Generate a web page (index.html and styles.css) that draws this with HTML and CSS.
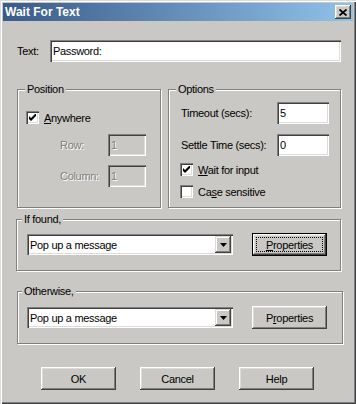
FILE: index.html
```html
<!DOCTYPE html>
<html lang="en">
<head>
  <meta charset="UTF-8">
  <title>Wait For Text</title>
  <link rel="stylesheet" href="styles.css">
</head>
<body>
  <div class="window">
    <div class="titlebar">
      <span class="title">Wait For Text</span>
      <span class="close">
        <svg width="8" height="7" viewBox="0 0 8 7"><path d="M0.5 0.5 L7.5 6.5 M7.5 0.5 L0.5 6.5" stroke="#000" stroke-width="1.7"/></svg>
      </span>
    </div>

    <div class="content">
      <div class="text-row">
        <span class="lbl">Text:</span>
        <div class="field wide">Password:</div>
      </div>

      <div class="groups">
        <fieldset class="group position">
          <legend>Position</legend>
          <div class="check first">
            <span class="box"><svg width="7" height="7" viewBox="0 0 7 7"><polygon points="0,2 2,4 7,-1 7,2 2,7 0,5" fill="#000"/></svg></span>
            <span><u>A</u>nywhere</span>
          </div>
          <div class="pair disabled">
            <span class="lbl">Row:</span>
            <div class="field small off">1</div>
          </div>
          <div class="pair disabled second">
            <span class="lbl">Column:</span>
            <div class="field small off">1</div>
          </div>
        </fieldset>

        <fieldset class="group options">
          <legend>Options</legend>
          <div class="opt-row first">
            <span class="lbl">Timeout (secs):</span>
            <div class="field num">5</div>
          </div>
          <div class="opt-row">
            <span class="lbl">Settle Time (secs):</span>
            <div class="field num">0</div>
          </div>
          <div class="check wait">
            <span class="box"><svg width="7" height="7" viewBox="0 0 7 7"><polygon points="0,2 2,4 7,-1 7,2 2,7 0,5" fill="#000"/></svg></span>
            <span><u>W</u>ait for input</span>
          </div>
          <div class="check case">
            <span class="box"></span>
            <span>Ca<u>s</u>e sensitive</span>
          </div>
        </fieldset>
      </div>

      <fieldset class="group found">
        <legend>If found,</legend>
        <div class="combo-row">
          <div class="combo">
            <span class="combo-text">Pop up a message</span>
            <span class="arrow"><svg width="7" height="4" viewBox="0 0 7 4"><polygon points="0,0 7,0 3.5,4" fill="#000"/></svg></span>
          </div>
          <div class="btn default"><span class="focus"><u>P</u>roperties</span></div>
        </div>
      </fieldset>

      <fieldset class="group otherwise">
        <legend>Otherwise,</legend>
        <div class="combo-row">
          <div class="combo">
            <span class="combo-text">Pop up a message</span>
            <span class="arrow"><svg width="7" height="4" viewBox="0 0 7 4"><polygon points="0,0 7,0 3.5,4" fill="#000"/></svg></span>
          </div>
          <div class="btn">P<u>r</u>operties</div>
        </div>
      </fieldset>

      <div class="buttons">
        <div class="btn">OK</div>
        <div class="btn">Cancel</div>
        <div class="btn">Help</div>
      </div>
    </div>
  </div>
</body>
</html>
```

FILE: styles.css
```css
body {
  margin: 0;
  font-family: "Liberation Sans", Arial, sans-serif;
  font-size: 11px;
  letter-spacing: -0.3px;
  color: #000;
}
.window {
  width: 356px;
  height: 404px;
  box-sizing: border-box;
  padding: 3px;
  background: #cac8c4;
  box-shadow: inset 1px 1px #dedcd8, inset 2px 2px #fff, inset -1px -1px #404040, inset -2px -2px #808080;
}
.titlebar {
  height: 18px;
  display: flex;
  align-items: center;
  justify-content: space-between;
  padding: 0 2px;
  background: linear-gradient(to right, #3a5a8a, #90c2ea);
}
.title {
  color: #fff;
  font-weight: bold;
  font-size: 12px;
  letter-spacing: 0;
}
.close {
  width: 16px;
  height: 14px;
  display: flex;
  align-items: center;
  justify-content: center;
  background: #cac8c4;
  box-shadow: inset -1px -1px #404040, inset 1px 1px #fff, inset -2px -2px #808080, inset 2px 2px #dedcd8;
}
.content {
  padding: 19px 12px 0 14px;
}
.text-row {
  display: flex;
  align-items: center;
}
.text-row .lbl {
  width: 33px;
}
.field {
  box-sizing: border-box;
  height: 22px;
  padding: 0 3px;
  display: flex;
  align-items: center;
  background: #fff;
  box-shadow: inset 1px 1px #808080, inset 2px 2px #404040, inset -1px -1px #fff, inset -2px -2px #dedcd8;
}
.field.wide {
  width: 292px;
}
.field.small {
  width: 38px;
}
.field.num {
  width: 52px;
}
.field.off {
  background: #cac8c4;
}
.disabled {
  color: #808080;
  text-shadow: 1px 1px #fff;
}
.groups {
  display: flex;
  gap: 7px;
  margin-top: 21px;
}
.group {
  margin: 0;
  padding: 0;
  min-width: 0;
  box-sizing: border-box;
  border: 1px solid #808080;
  box-shadow: inset 1px 1px #fff, 1px 1px #fff;
}
.group legend {
  padding: 0 2px;
  height: 13px;
  line-height: 13px;
  background: #cac8c4;
}
.position {
  width: 144px;
  height: 125px;
  padding-left: 8px;
}
.position legend {
  margin-left: -1px;
}
.options {
  width: 173px;
  height: 125px;
  padding-left: 11px;
}
.options legend {
  margin-left: -4px;
}
.check {
  display: flex;
  align-items: center;
  gap: 5px;
  height: 13px;
}
.check.first {
  margin-top: 15px;
}
.check.wait {
  margin-top: 7px;
}
.check.case {
  margin-top: 9px;
}
.box {
  width: 13px;
  height: 13px;
  display: flex;
  align-items: center;
  justify-content: center;
  background: #fff;
  box-shadow: inset 1px 1px #808080, inset 2px 2px #404040, inset -1px -1px #fff, inset -2px -2px #dedcd8;
}
.pair {
  display: flex;
  align-items: center;
  margin-top: 10px;
}
.pair.second {
  margin-top: 9px;
}
.pair .lbl {
  width: 48px;
  margin-left: 34px;
}
.opt-row {
  display: flex;
  align-items: center;
  margin-top: 10px;
}
.opt-row.first {
  margin-top: 6px;
}
.opt-row .lbl {
  width: 96px;
  padding-left: 1px;
}
.found {
  width: 325px;
  height: 58px;
  margin: 5px 0 0 -1px;
  padding-left: 10px;
}
.found legend {
  margin-left: -5px;
}
.otherwise {
  width: 326px;
  height: 59px;
  margin-top: 14px;
  padding-left: 9px;
}
.otherwise legend {
  margin-left: -5px;
}
.combo-row {
  display: flex;
  align-items: center;
  margin-top: 7px;
}
.otherwise .combo-row {
  margin-top: 8px;
}
.combo {
  box-sizing: border-box;
  width: 206px;
  height: 21px;
  padding: 2px;
  display: flex;
  align-items: center;
  background: #fff;
  box-shadow: inset 1px 1px #808080, inset 2px 2px #404040, inset -1px -1px #fff, inset -2px -2px #dedcd8;
}
.combo-text {
  flex: 1;
  padding-left: 1px;
}
.arrow {
  width: 16px;
  height: 17px;
  display: flex;
  align-items: center;
  justify-content: center;
  background: #cac8c4;
  box-shadow: inset -1px -1px #404040, inset 1px 1px #dedcd8, inset -2px -2px #808080, inset 2px 2px #fff;
}
.btn {
  box-sizing: border-box;
  width: 75px;
  height: 23px;
  display: flex;
  align-items: center;
  justify-content: center;
  background: #cac8c4;
  box-shadow: inset -1px -1px #404040, inset 1px 1px #fff, inset -2px -2px #808080, inset 2px 2px #dedcd8;
}
.combo-row .btn {
  margin-left: 19px;
}
.btn.default {
  padding: 4px;
  box-shadow: inset 0 0 0 1px #000, inset -2px -2px #404040, inset 2px 2px #fff, inset -3px -3px #808080, inset 3px 3px #dedcd8;
}
.focus {
  flex: 1;
  align-self: stretch;
  display: flex;
  align-items: center;
  justify-content: center;
  border: 1px dotted #000;
}
.buttons {
  display: flex;
  gap: 24px;
  margin: 23px 0 0 24px;
}
```
